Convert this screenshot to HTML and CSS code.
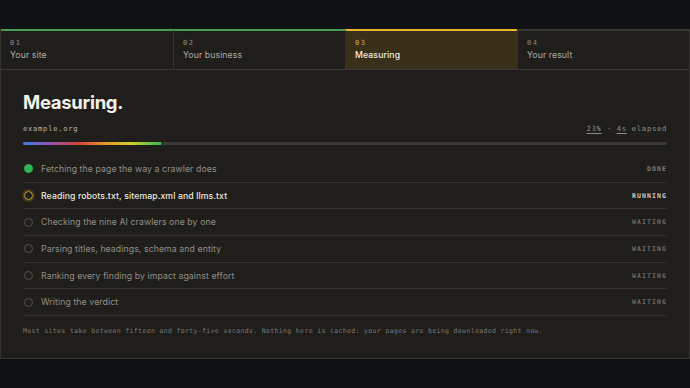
FILE: index.html
```html
<!DOCTYPE html>
<html lang="en">
  <head>
    <meta charset="UTF-8" />
    <meta name="viewport" content="width=device-width, initial-scale=1.0" />
    <title>Measuring</title>
    <link rel="stylesheet" href="styles.css">
  </head>
  <body>
    <main class="panel">
      <nav class="steps">
        <div class="step done">
          <span class="step-num">01</span>
          <span class="step-label">Your site</span>
        </div>
        <div class="step done">
          <span class="step-num">02</span>
          <span class="step-label">Your business</span>
        </div>
        <div class="step active">
          <span class="step-num">03</span>
          <span class="step-label">Measuring</span>
        </div>
        <div class="step">
          <span class="step-num">04</span>
          <span class="step-label">Your result</span>
        </div>
      </nav>

      <section class="body">
        <h1>Measuring.</h1>
        <div class="meta">
          <span class="domain">example.org</span>
          <span class="elapsed"><u>23%</u> · <u>4s</u> elapsed</span>
        </div>
        <div class="progress"><div class="progress-fill" style="width: 21.5%"></div></div>

        <ul class="tasks">
          <li class="task is-done">
            <span class="dot"></span>
            <span class="task-name">Fetching the page the way a crawler does</span>
            <span class="status">DONE</span>
          </li>
          <li class="task is-running">
            <span class="dot"></span>
            <span class="task-name">Reading robots.txt, sitemap.xml and llms.txt</span>
            <span class="status">RUNNING</span>
          </li>
          <li class="task">
            <span class="dot"></span>
            <span class="task-name">Checking the nine AI crawlers one by one</span>
            <span class="status">WAITING</span>
          </li>
          <li class="task">
            <span class="dot"></span>
            <span class="task-name">Parsing titles, headings, schema and entity</span>
            <span class="status">WAITING</span>
          </li>
          <li class="task">
            <span class="dot"></span>
            <span class="task-name">Ranking every finding by impact against effort</span>
            <span class="status">WAITING</span>
          </li>
          <li class="task">
            <span class="dot"></span>
            <span class="task-name">Writing the verdict</span>
            <span class="status">WAITING</span>
          </li>
        </ul>

        <p class="note">Most sites take between fifteen and forty-five seconds. Nothing here is cached: your pages are being downloaded right now.</p>
      </section>
    </main>
  </body>
</html>
```

FILE: styles.css
```css
* {
  box-sizing: border-box;
}

body {
  margin: 0;
  padding: 29px 0 0;
  background-color: #111214;
  font-family: Inter, "Noto Sans", sans-serif;
  color: #e8e6e1;
}

.panel {
  background-color: #1f1e1b;
  border: 1px solid #34332f;
  border-top: none;
  height: 330px;
}

/* step tabs */
.steps {
  display: grid;
  grid-template-columns: repeat(4, 1fr);
  border-bottom: 1px solid #3a3935;
}

.step {
  display: flex;
  flex-direction: column;
  gap: 3px;
  padding: 8px 9px 7px;
  border-top: 2px solid #3a3935;
  border-left: 1px solid #34332f;
  height: 40px;
}

.step:first-child {
  border-left: none;
}

.step.done {
  border-top-color: #4a9d55;
}

.step.active {
  border-top-color: #e3b62c;
  background-color: #3a3019;
}

.step-num {
  font-family: "DejaVu Sans Mono", monospace;
  font-size: 7px;
  letter-spacing: 1.5px;
  color: #8b8984;
}

.step.active .step-num {
  color: #d4b042;
}

.step-label {
  font-size: 8.7px;
  letter-spacing: 0.1px;
  color: #aeaca6;
}

.step.active .step-label {
  color: #f1ede2;
  font-weight: 500;
}

/* main body */
.body {
  padding: 22px 22px 0;
}

h1 {
  margin: 0;
  font-size: 18.5px;
  font-weight: 700;
  letter-spacing: -0.3px;
  color: #f4f2ec;
  line-height: 20px;
}

.meta {
  display: flex;
  justify-content: space-between;
  align-items: center;
  margin-top: 12px;
  font-family: "DejaVu Sans Mono", monospace;
  font-size: 7.2px;
  letter-spacing: 0.7px;
  color: #b4b2ac;
}

.elapsed {
  color: #8f8d88;
}

.elapsed u {
  text-decoration-thickness: 1px;
  text-underline-offset: 2px;
}

.progress {
  margin-top: 9px;
  height: 3px;
  background-color: #3a3936;
  border-radius: 2px;
  overflow: hidden;
}

.progress-fill {
  height: 100%;
  background: linear-gradient(90deg, #3d7ee6 0%, #8a55b8 18%, #d6433a 40%, #e8902c 58%, #cdd12e 78%, #3fb553 100%);
}

/* task list */
.tasks {
  list-style: none;
  margin: 11px 0 0;
  padding: 0;
}

.task {
  display: flex;
  align-items: center;
  gap: 8px;
  height: 26.7px;
  border-bottom: 1px solid #34332f;
  font-size: 8.7px;
  letter-spacing: 0.1px;
  color: #918f89;
}

.dot {
  width: 9px;
  height: 9px;
  border-radius: 50%;
  border: 1px solid #55534f;
  margin-left: 1px;
  flex-shrink: 0;
}

.task.is-done .dot {
  background-color: #2fb457;
  border-color: #2fb457;
}

.task.is-running .dot {
  border: 1.5px solid #c9a12a;
  box-shadow: 0 0 0 2px rgba(201, 161, 42, 0.22);
}

.task.is-running .task-name {
  color: #ece8dd;
  font-weight: 500;
}

.task-name {
  flex: 1;
}

.status {
  font-family: "DejaVu Sans Mono", monospace;
  font-size: 6.5px;
  font-weight: 700;
  letter-spacing: 1.1px;
  color: #6f6d68;
}

.task.is-done .status {
  color: #7f7d78;
}

.task.is-running .status {
  color: #d2cec4;
}

.note {
  margin: 11px 0 0;
  font-family: "DejaVu Sans Mono", monospace;
  font-size: 6.5px;
  letter-spacing: 0.35px;
  color: #7c7a75;
}
```
